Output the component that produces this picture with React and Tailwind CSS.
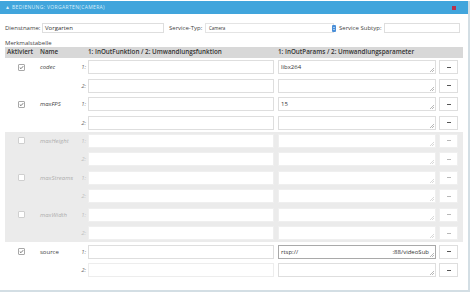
import React from 'react'

const props = [
  { name: 'codec', checked: true, v1: 'libx264' },
  { name: 'maxFPS', checked: true, v1: '15' },
  { name: 'maxHeight', off: true },
  { name: 'maxStreams', off: true },
  { name: 'maxWidth', off: true },
  { name: 'source', checked: true, plain: true, source: true },
]

function Grip({ off }) {
  return (
    <svg width="4" height="4" viewBox="0 0 4 4" className="absolute right-[1px] bottom-[1px]">
      <path d="M4 0L0 4M4 2L2 4" stroke={off ? '#c8c8c8' : '#9a9a9a'} strokeWidth="0.7" />
    </svg>
  )
}

function Check({ checked, off }) {
  return (
    <div
      className={`w-[7px] h-[7px] rounded-[1px] border bg-white flex items-center justify-center ${
        off ? 'border-[#cfcfcf]' : 'border-[#a8a8a8]'
      }`}
    >
      {checked && (
        <svg width="5" height="5" viewBox="0 0 5 5">
          <path d="M0.8 2.6L2 3.7L4.2 1.2" fill="none" stroke="#555" strokeWidth="0.8" />
        </svg>
      )}
    </div>
  )
}

function SubRow({ p, idx }) {
  const first = idx === 1
  const off = p.off
  const value = first ? p.v1 : ''
  return (
    <div className="flex h-[14px] items-center">
      <div className="w-[30px] pl-[13px]">{first && <Check checked={p.checked} off={off} />}</div>
      <div
        className={`w-[41px] pl-[5px] ${p.plain ? '' : 'italic'} ${
          off ? 'text-[#adadad]' : 'text-[#444]'
        }`}
      >
        {first ? p.name : ''}
      </div>
      <div className={`w-[12px] pr-[2px] text-right italic ${off ? 'text-[#bdbdbd]' : 'text-[#666]'}`}>
        {idx}:
      </div>
      <div
        className={`w-[186px] h-[14px] bg-white border ${
          off ? 'border-[#efefef]' : p.source && !first ? 'border-[#ededed]' : 'border-[#dedede]'
        }`}
      />
      <div
        className={`relative ml-[4px] w-[158px] h-[14px] bg-white border flex items-center justify-between px-[2px] pr-[6px] text-[#333] ${
          off ? 'border-[#efefef]' : p.source && first ? 'border-[#a9a9a9]' : 'border-[#dedede]'
        }`}
      >
        {p.source && first ? (
          <>
            <span>rtsp://</span>
            <span>:88/videoSub</span>
          </>
        ) : (
          <span>{value}</span>
        )}
        <Grip off={off} />
      </div>
      <div
        className={`ml-[3px] w-[19px] h-[14px] bg-white border flex items-center justify-center ${
          off ? 'border-[#efefef]' : 'border-[#dedede]'
        }`}
      >
        <span className={`w-[4px] h-[1px] ${off ? 'bg-[#b8b8b8]' : 'bg-[#555]'}`} />
      </div>
    </div>
  )
}

export default function App() {
  return (
    <div className="w-[474px] h-[296px] bg-white font-['Open_Sans',sans-serif] text-[6px] text-[#444] leading-none">
      <div className="w-[470px] h-[291px] border-r-2 border-b-2 border-[#d3dee4]">
        <div className="mt-[1px] h-[13px] bg-[#41a5dc] flex items-center justify-between pl-[5px] pr-[12px]">
          <span className="text-[5px] tracking-[0.35px] text-[#d9effb]">▲ BEDIENUNG: VORGARTEN(CAMERA)</span>
          <span className="w-[4px] h-[4px] bg-[#b8324c]" />
        </div>

        <div className="flex items-center h-[10px] mt-[9px] pl-[5px]">
          <span className="w-[37px]">Dienstname:</span>
          <div className="w-[122px] h-[10px] border border-[#dedede] flex items-center pl-[2px] text-[#333]">
            Vorgarten
          </div>
          <span className="ml-[5px] w-[36px]">Service-Typ:</span>
          <div className="relative w-[129px] h-[10px] border border-[#e4e4e4] flex items-center pl-[3px] text-[4.5px] text-[#333]">
            Camera
            <div className="absolute right-[-3px] top-[1px] w-[4px] h-[7px] rounded-[1px] bg-[#4a8fd8] flex flex-col items-center justify-center gap-[1px]">
              <span className="w-0 h-0 border-l-[1.2px] border-r-[1.2px] border-b-[1.2px] border-l-transparent border-r-transparent border-b-white" />
              <span className="w-0 h-0 border-l-[1.2px] border-r-[1.2px] border-t-[1.2px] border-l-transparent border-r-transparent border-t-white" />
            </div>
          </div>
          <span className="ml-[5px] w-[45px]">Service Subtyp:</span>
          <div className="w-[76px] h-[10px] border border-[#dedede]" />
        </div>

        <div className="pl-[5px] mt-[5px] h-[9px] flex items-center">Merkmalstabelle</div>

        <div className="ml-[5px] w-[458px]">
          <div className="h-[11px] bg-[#d8d8d8] flex items-center font-semibold text-[6.3px] text-[#333]">
            <span className="w-[30px] pl-[2px]">Aktiviert</span>
            <span className="w-[53px] pl-[5px]">Name</span>
            <span className="w-[190px]">1: InOutFunktion / 2: Umwandlungsfunktion</span>
            <span>1: InOutParams / 2: Umwandlungsparameter</span>
          </div>
          {props.map((p) => (
            <div
              key={p.name}
              className={`flex flex-col gap-[4.5px] py-[2.2px] ${p.off ? 'bg-[#ebebeb]' : ''}`}
            >
              <SubRow p={p} idx={1} />
              <SubRow p={p} idx={2} />
            </div>
          ))}
        </div>
      </div>
    </div>
  )
}
